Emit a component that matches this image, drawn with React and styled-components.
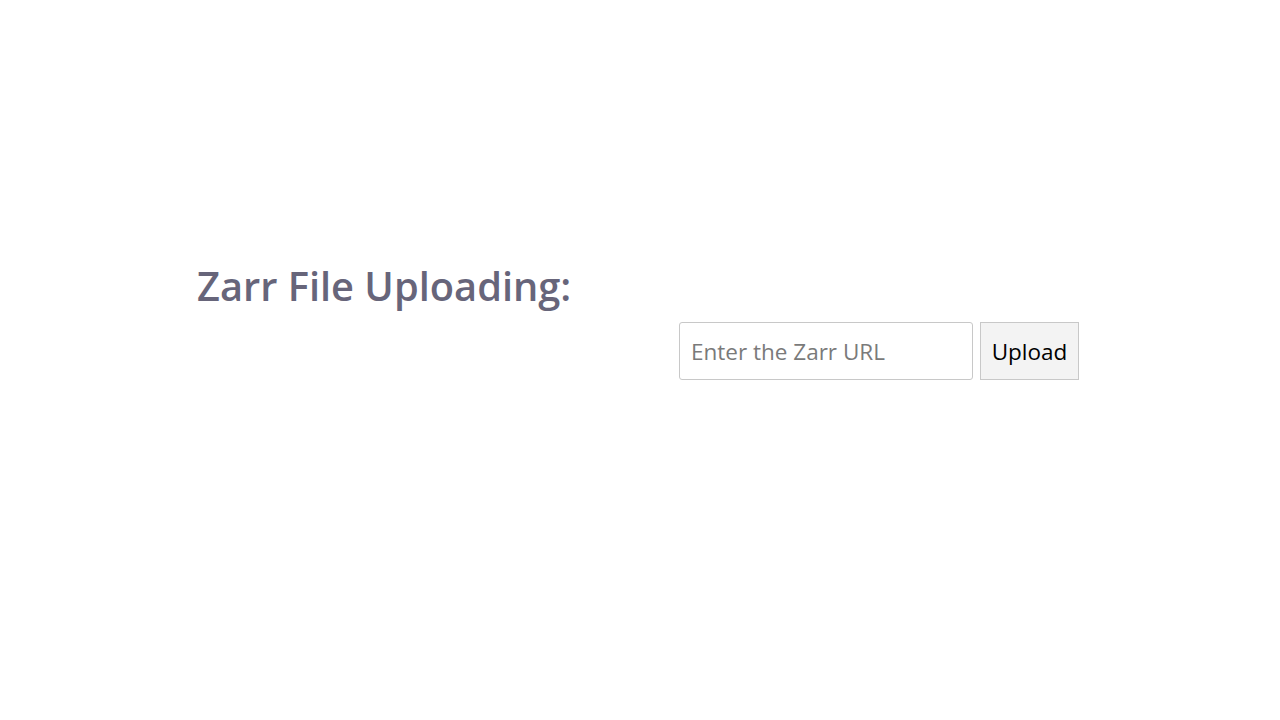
import React from "react";
import styled, { createGlobalStyle } from "styled-components";

const Global = createGlobalStyle`
  html, body { margin: 0; padding: 0; background: #fff; }
  body { font-family: "Open Sans", "Noto Sans", sans-serif; }
`;

const Page = styled.div`
  height: 720px;
  display: flex;
  justify-content: center;
  padding-right: 4px;
  box-sizing: border-box;
`;

const Container = styled.div`
  width: 882px;
  padding-top: 258px;
  display: flex;
  flex-direction: column;
`;

const Title = styled.h1`
  margin: 0;
  font-family: "Open Sans", sans-serif;
  font-weight: 600;
  font-size: 39.8px;
  line-height: 56px;
  color: #67657a;
`;

const Form = styled.form`
  margin-top: 8px;
  display: flex;
  justify-content: flex-end;
  gap: 7px;
`;

const Input = styled.input`
  box-sizing: border-box;
  width: 294px;
  height: 58px;
  border: 1px solid #c8c8c8;
  border-radius: 3px;
  padding: 0 11px;
  font-family: "Open Sans", sans-serif;
  font-size: 22.5px;
  color: #333;
  outline: none;
  &::placeholder { color: #7a7a7a; }
`;

const Button = styled.button`
  box-sizing: border-box;
  width: 99px;
  height: 58px;
  border: 1px solid #c8c8c8;
  border-radius: 0;
  background: #f3f3f3;
  font-family: "Open Sans", sans-serif;
  font-size: 22.5px;
  color: #000;
  padding: 0;
  cursor: pointer;
`;

export default function App() {
  return (
    <>
      <Global />
      <Page>
        <Container>
          <Title>Zarr File Uploading:</Title>
          <Form onSubmit={(e) => e.preventDefault()}>
            <Input placeholder="Enter the Zarr URL" />
            <Button type="submit">Upload</Button>
          </Form>
        </Container>
      </Page>
    </>
  );
}
